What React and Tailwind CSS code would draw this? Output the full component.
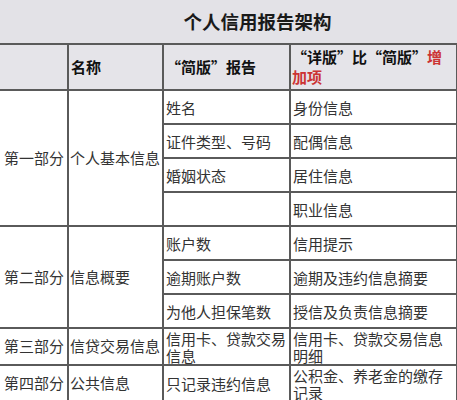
import React from 'react';

const ROWS = [
  { part: '第一部分', name: '个人基本信息', items: [['姓名', '身份信息'], ['证件类型、号码', '配偶信息'], ['婚姻状态', '居住信息'], ['', '职业信息']] },
  { part: '第二部分', name: '信息概要', items: [['账户数', '信用提示'], ['逾期账户数', '逾期及违约信息摘要'], ['为他人担保笔数', '授信及负责信息摘要']] },
  { part: '第三部分', name: '信贷交易信息', items: [['信用卡、贷款交易信息', '信用卡、贷款交易信息明细']], tall: true },
  { part: '第四部分', name: '公共信息', items: [['只记录违约信息', '公积金、养老金的缴存记录']], tall: true },
];

const cell = 'border-2 border-[#5a5a5a] align-middle';

export default function App() {
  return (
    <div
      className="w-[457px] h-[400px] overflow-hidden bg-white text-[#333]"
      style={{ fontFamily: '"Noto Sans CJK SC", "Noto Sans", sans-serif' }}
    >
      {/* Title */}
      <div className="h-[43px] bg-[#e3e2e7] flex items-center justify-center pl-[58px]">
        <h1 className="text-[18.5px] font-bold text-[#1a1a1a] leading-none">个人信用报告架构</h1>
      </div>

      <table className="w-[457px] table-fixed border-collapse text-[15px]">
        <colgroup>
          <col className="w-[68px]" />
          <col className="w-[95px]" />
          <col className="w-[127px]" />
          <col className="w-[167px]" />
        </colgroup>
        <thead>
          <tr className="bg-[#e5e4e9] text-[#111] font-bold">
            <th className={`${cell} border-l-0 h-[46px]`}></th>
            <th className={`${cell} text-left pl-[2px] font-bold`}>名称</th>
            <th className={`${cell} text-left pl-[2px] font-bold`}>“简版”报告</th>
            <th className={`${cell} text-left pl-[1px] pr-[2px] font-bold leading-[20px]`}>
              “详版”比“简版”<span className="text-[#cc3333]">增加项</span>
            </th>
          </tr>
        </thead>
        <tbody>
          {ROWS.map((sec) =>
            sec.items.map((it, i) => (
              <tr key={sec.part + i}>
                {i === 0 && (
                  <>
                    <td rowSpan={sec.items.length} className={`${cell} border-l-0 pl-[4px] whitespace-nowrap`}>
                      {sec.part}
                    </td>
                    <td rowSpan={sec.items.length} className={`${cell} pl-[1px] whitespace-nowrap`}>
                      {sec.name}
                    </td>
                  </>
                )}
                <td className={`${cell} pl-[2px] leading-[17px] ${sec.tall ? 'h-[37px]' : 'h-[34px]'}`}>{it[0]}</td>
                <td className={`${cell} pl-[2px] leading-[17px]`}>{it[1]}</td>
              </tr>
            ))
          )}
        </tbody>
      </table>
    </div>
  );
}
